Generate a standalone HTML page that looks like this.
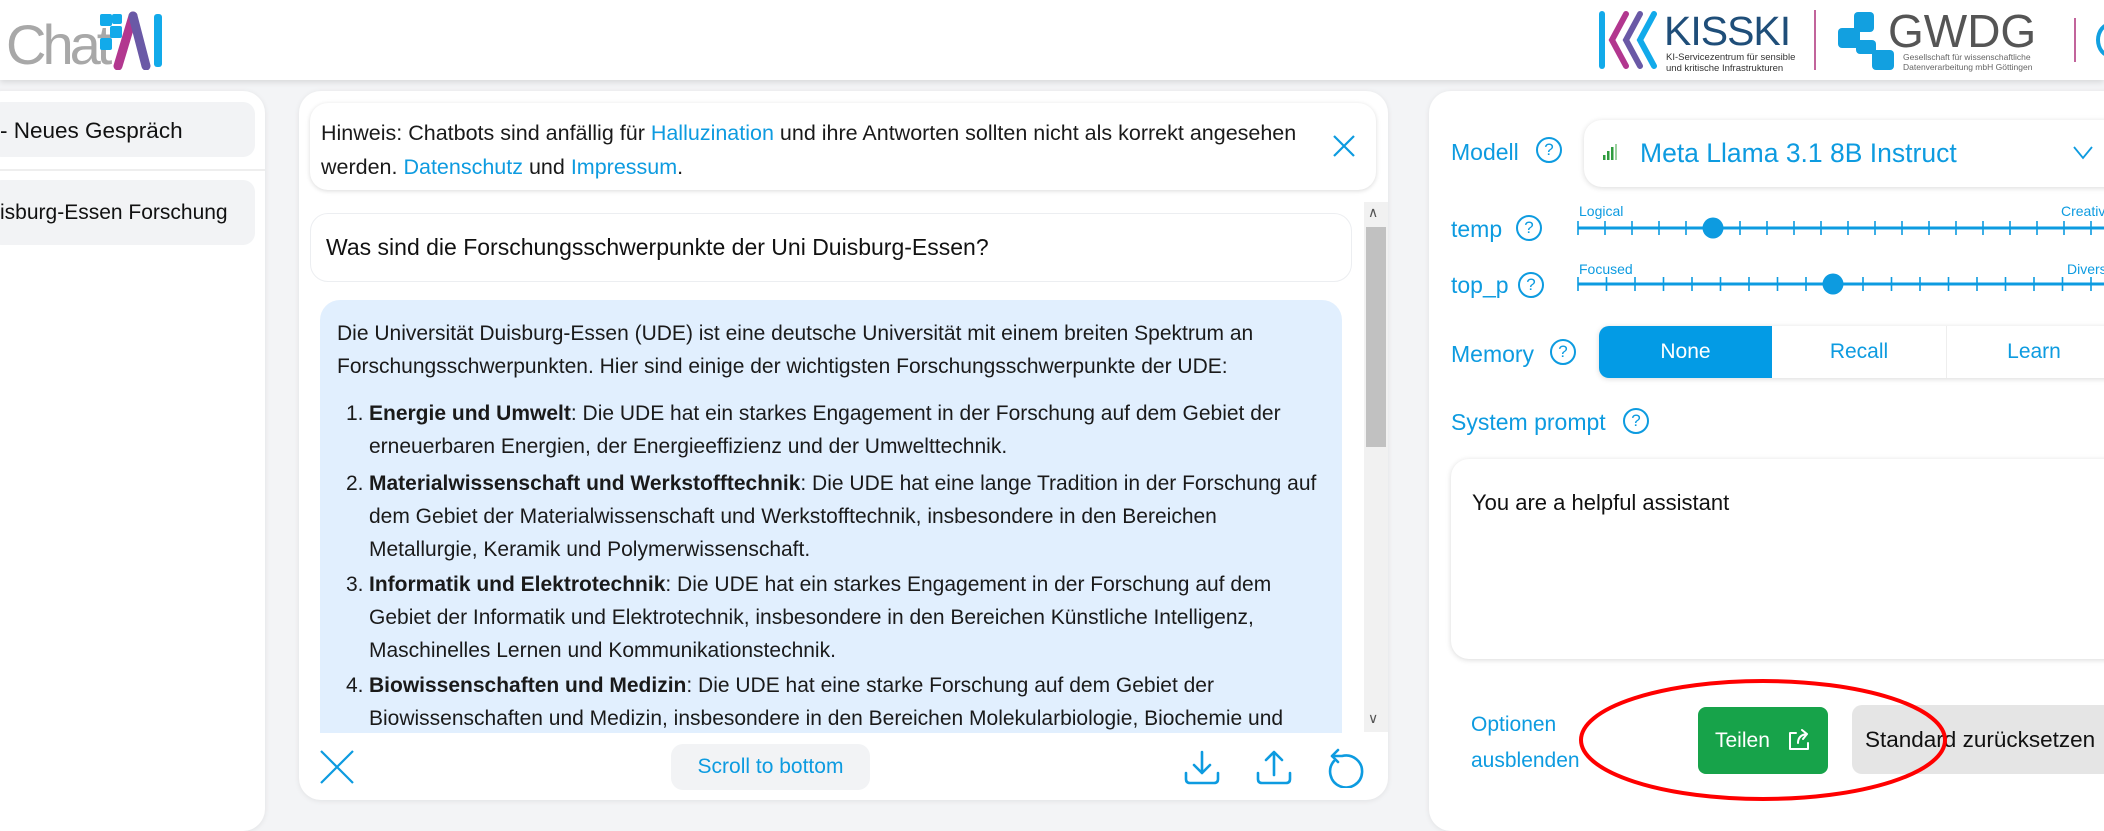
<!DOCTYPE html>
<html><head><meta charset="utf-8"><style>
*{box-sizing:border-box;margin:0;padding:0}
body{width:2104px;height:814px;overflow:hidden;background:#f3f4f6;font-family:"Liberation Sans",sans-serif;position:relative;color:#111}
.abs{position:absolute}
.header{left:0;top:0;width:2104px;height:80px;background:#fff;box-shadow:0 2px 6px rgba(0,0,0,.12)}
.blue{color:#0d9be0}
.panel{background:#fff;border-radius:22px;box-shadow:0 1px 6px rgba(0,0,0,.08)}
.txt{font-size:21px;line-height:33px;white-space:nowrap;color:#1a1a1a}
.q{border:2px solid #0d9be0;border-radius:50%;width:26px;height:26px;font-size:17px;line-height:22px;text-align:center;color:#0d9be0;position:absolute}
.lbl{font-size:23px;color:#0d9be0;position:absolute}
</style></head><body>
<div class="abs header"></div>
<!-- Chat AI logo -->
<div class="abs" style="left:6px;top:12px;font-size:56px;color:#a8a8a8;letter-spacing:-4px;font-family:'Liberation Sans',sans-serif">Chat</div>
<svg class="abs" style="left:98px;top:10px" width="70" height="60" viewBox="0 0 70 60">
<rect x="2" y="4" width="12" height="12" rx="2" fill="#12aaea"/><rect x="12" y="16" width="12" height="12" rx="2" fill="#12aaea"/><rect x="2" y="28" width="12" height="12" rx="2" fill="#12aaea"/><rect x="14" y="4" width="10" height="10" rx="2" fill="#12aaea"/>
<path d="M20 56 L35 6" stroke="#b2378f" stroke-width="9" stroke-linecap="round"/>
<path d="M35 6 L48 56" stroke="#6a59a6" stroke-width="9" stroke-linecap="round"/>
<rect x="56" y="4" width="8" height="53" rx="3" fill="#12aaea"/>
</svg>
<!-- KISSKI -->
<svg class="abs" style="left:1598px;top:10px" width="60" height="60" viewBox="0 0 60 60">
<path d="M4 4 V56" stroke="#12aaea" stroke-width="6" stroke-linecap="round"/>
<path d="M28 4 L14 30 L28 56" stroke="#b2378f" stroke-width="6" fill="none" stroke-linecap="round"/>
<path d="M42 4 L28 30 L42 56" stroke="#6a59a6" stroke-width="6" fill="none" stroke-linecap="round"/>
<path d="M56 4 L42 30 L56 56" stroke="#12aaea" stroke-width="6" fill="none" stroke-linecap="round"/>
</svg>
<div class="abs" style="left:1664px;top:8px;font-size:41px;color:#1f4e79;letter-spacing:-1px">KISSKI</div>
<div class="abs" style="left:1666px;top:52px;font-size:9.5px;line-height:11px;color:#333">KI-Servicezentrum für sensible<br>und kritische Infrastrukturen</div>
<div class="abs" style="left:1814px;top:10px;width:2px;height:60px;background:#c2649b"></div>
<svg class="abs" style="left:1836px;top:10px" width="60" height="60" viewBox="0 0 60 60">
<rect x="18" y="2" width="20" height="20" rx="4" fill="#12a0e0"/><rect x="2" y="18" width="22" height="20" rx="4" fill="#12a0e0"/><rect x="20" y="30" width="20" height="14" rx="4" fill="#12a0e0"/><rect x="36" y="40" width="22" height="20" rx="4" fill="#12a0e0"/>
</svg>
<div class="abs" style="left:1888px;top:4px;font-size:46px;color:#555">GWDG</div>
<div class="abs" style="left:1903px;top:52px;font-size:8.5px;line-height:10px;color:#666">Gesellschaft für wissenschaftliche<br>Datenverarbeitung mbH Göttingen</div>
<div class="abs" style="left:2074px;top:18px;width:2px;height:44px;background:#c2649b"></div>
<div class="abs" style="left:2096px;top:22px;width:30px;height:36px;border:4px solid #12a0e0;border-radius:50%"></div>

<!-- sidebar -->
<div class="abs panel" style="left:-20px;top:91px;width:285px;height:740px"></div>
<div class="abs" style="left:-10px;top:102px;width:265px;height:55px;background:#f2f3f5;border-radius:12px"></div>
<div class="abs" style="left:0;top:118px;font-size:22.5px">- Neues Gespräch</div>
<div class="abs" style="left:0;top:169px;width:265px;height:2px;background:#eee"></div>
<div class="abs" style="left:-10px;top:180px;width:265px;height:65px;background:#f2f3f5;border-radius:12px"></div>
<div class="abs" style="left:0;top:201px;font-size:21px">isburg-Essen Forschung</div>

<!-- center -->
<div class="abs panel" style="left:299px;top:91px;width:1089px;height:709px"></div>
<div class="abs" style="left:310px;top:103px;width:1066px;height:87px;background:#fff;border-radius:18px;box-shadow:0 1px 5px rgba(0,0,0,.15)"></div>
<div class="abs txt" style="left:321px;top:116px;font-size:21.5px;line-height:34px">Hinweis: Chatbots sind anfällig für <span class="blue">Halluzination</span> und ihre Antworten sollten nicht als korrekt angesehen<br>werden. <span class="blue">Datenschutz</span> und <span class="blue">Impressum</span>.</div>
<svg class="abs" style="left:1332px;top:134px" width="24" height="24"><path d="M2 2L22 22M22 2L2 22" stroke="#0d9be0" stroke-width="2.2"/></svg>
<div class="abs" style="left:310px;top:213px;width:1042px;height:69px;border:1.5px solid #eceef1;border-radius:18px;background:#fff"></div>
<div class="abs" style="left:326px;top:234px;font-size:23px;white-space:nowrap">Was sind die Forschungsschwerpunkte der Uni Duisburg-Essen?</div>
<!-- scrollbar -->
<div class="abs" style="left:1364px;top:202px;width:24px;height:530px;background:#f1f1f1"></div>
<div class="abs" style="left:1366px;top:227px;width:20px;height:220px;background:#c1c1c1"></div>
<div class="abs" style="left:1368px;top:204px;font-size:14px;color:#555">&#8743;</div>
<div class="abs" style="left:1368px;top:710px;font-size:14px;color:#555">&#8744;</div>
<div class="abs" style="left:320px;top:300px;width:1022px;height:433px;background:#e1effe;border-radius:20px 20px 0 0;overflow:hidden">
<div class="txt" style="position:absolute;left:17px;top:17px">Die Universität Duisburg-Essen (UDE) ist eine deutsche Universität mit einem breiten Spektrum an<br>Forschungsschwerpunkten. Hier sind einige der wichtigsten Forschungsschwerpunkte der UDE:</div>
<div class="txt" style="position:absolute;left:26px;top:97px">1.</div>
<div class="txt" style="position:absolute;left:49px;top:97px"><b>Energie und Umwelt</b>: Die UDE hat ein starkes Engagement in der Forschung auf dem Gebiet der<br>erneuerbaren Energien, der Energieeffizienz und der Umwelttechnik.</div>
<div class="txt" style="position:absolute;left:26px;top:167px">2.</div>
<div class="txt" style="position:absolute;left:49px;top:167px"><b>Materialwissenschaft und Werkstofftechnik</b>: Die UDE hat eine lange Tradition in der Forschung auf<br>dem Gebiet der Materialwissenschaft und Werkstofftechnik, insbesondere in den Bereichen<br>Metallurgie, Keramik und Polymerwissenschaft.</div>
<div class="txt" style="position:absolute;left:26px;top:268px">3.</div>
<div class="txt" style="position:absolute;left:49px;top:268px"><b>Informatik und Elektrotechnik</b>: Die UDE hat ein starkes Engagement in der Forschung auf dem<br>Gebiet der Informatik und Elektrotechnik, insbesondere in den Bereichen Künstliche Intelligenz,<br>Maschinelles Lernen und Kommunikationstechnik.</div>
<div class="txt" style="position:absolute;left:26px;top:369px">4.</div>
<div class="txt" style="position:absolute;left:49px;top:369px"><b>Biowissenschaften und Medizin</b>: Die UDE hat eine starke Forschung auf dem Gebiet der<br>Biowissenschaften und Medizin, insbesondere in den Bereichen Molekularbiologie, Biochemie und</div>
</div>
<svg class="abs" style="left:320px;top:750px" width="34" height="34"><path d="M1 1L33 33M33 1L1 33" stroke="#0d9be0" stroke-width="2.2"/></svg>
<div class="abs" style="left:671px;top:744px;width:199px;height:46px;background:#f2f3f5;border-radius:12px;text-align:center;line-height:46px;font-size:21px;color:#0d9be0;white-space:nowrap">Scroll to bottom</div>
<svg class="abs" style="left:1184px;top:749px" width="36" height="36" viewBox="0 0 36 36" fill="none" stroke="#0d9be0" stroke-width="2.6" stroke-linecap="round" stroke-linejoin="round"><path d="M18 3V24M10 16L18 24L26 16M2 24V30Q2 34 6 34H30Q34 34 34 30V24"/></svg>
<svg class="abs" style="left:1256px;top:749px" width="36" height="36" viewBox="0 0 36 36" fill="none" stroke="#0d9be0" stroke-width="2.6" stroke-linecap="round" stroke-linejoin="round"><path d="M18 26V3M10 11L18 3L26 11M2 24V30Q2 34 6 34H30Q34 34 34 30V24"/></svg>
<svg class="abs" style="left:1328px;top:748px" width="38" height="40" viewBox="0 0 38 40" fill="none" stroke="#0d9be0" stroke-width="2.6" stroke-linecap="round" stroke-linejoin="round"><path d="M6 13A16 16 0 1 0 14 8H4M10 2L4 8L10 14"/></svg>

<!-- right panel -->
<div class="abs panel" style="left:1429px;top:91px;width:700px;height:740px"></div>
<div class="lbl" style="left:1451px;top:139px">Modell</div><div class="q" style="left:1536px;top:137px">?</div>
<div class="abs" style="left:1584px;top:120px;width:540px;height:67px;background:#fff;border-radius:18px;box-shadow:0 1px 6px rgba(0,0,0,.15)"></div>
<svg class="abs" style="left:1603px;top:144px" width="14" height="16"><rect x="0" y="11" width="2.5" height="5" fill="#2e9b3e"/><rect x="4" y="7" width="2.5" height="9" fill="#2e9b3e"/><rect x="8" y="3" width="2.5" height="13" fill="#2e9b3e"/><rect x="12" y="0" width="2" height="16" fill="#9bd19f"/></svg>
<div class="abs" style="left:1640px;top:138px;font-size:26.5px;color:#0d9be0;white-space:nowrap">Meta Llama 3.1 8B Instruct</div>
<svg class="abs" style="left:2073px;top:146px" width="20" height="14"><path d="M1 1L10 12L19 1" stroke="#0d9be0" stroke-width="1.8" fill="none"/></svg>

<div class="lbl" style="left:1451px;top:216px">temp</div><div class="q" style="left:1516px;top:215px">?</div>
<div class="lbl" style="left:1451px;top:272px">top_p</div><div class="q" style="left:1518px;top:272px">?</div>
<div class="abs" style="left:1579px;top:203px;font-size:14px;color:#0d9be0">Logical</div>
<div class="abs" style="left:2061px;top:203px;font-size:14px;color:#0d9be0">Creative</div>
<div class="abs" style="left:1579px;top:261px;font-size:14px;color:#0d9be0">Focused</div>
<div class="abs" style="left:2067px;top:261px;font-size:14px;color:#0d9be0">Diverse</div>
<svg class="abs" style="left:1570px;top:210px" width="534" height="90">
<g stroke="#0d9be0" stroke-width="3"><line x1="8" y1="18" x2="534" y2="18"/><line x1="8" y1="74" x2="534" y2="74"/></g>
<g stroke="#0d9be0" stroke-width="1.6">
<path d="M8 11V25M35 11V25M62 11V25M89 11V25M116 11V25M170 11V25M197 11V25M224 11V25M251 11V25M278 11V25M305 11V25M332 11V25M359 11V25M386 11V25M413 11V25M440 11V25M467 11V25M494 11V25M521 11V25"/>
<path d="M8 67V81M36.5 67V81M65 67V81M93.5 67V81M122 67V81M150.5 67V81M179 67V81M207.5 67V81M236 67V81M293 67V81M321.5 67V81M350 67V81M378.5 67V81M407 67V81M435.5 67V81M464 67V81M492.5 67V81M521 67V81"/>
</g>
<circle cx="143" cy="18" r="10.5" fill="#0d9be0"/><circle cx="263" cy="74" r="10.5" fill="#0d9be0"/>
</svg>

<div class="lbl" style="left:1451px;top:341px">Memory</div><div class="q" style="left:1550px;top:339px">?</div>
<div class="abs" style="left:1599px;top:326px;width:520px;height:52px;background:#fff;border-radius:10px;box-shadow:0 1px 6px rgba(0,0,0,.15);overflow:hidden">
<div class="abs" style="left:0;top:0;width:173px;height:52px;background:#039be5;color:#fff;font-size:21px;text-align:center;line-height:52px">None</div>
<div class="abs" style="left:173px;top:0;width:174px;height:52px;color:#0d9be0;font-size:21px;text-align:center;line-height:52px">Recall</div>
<div class="abs" style="left:347px;top:0;width:1px;height:52px;background:#eee"></div>
<div class="abs" style="left:348px;top:0;width:174px;height:52px;color:#0d9be0;font-size:21px;text-align:center;line-height:52px">Learn</div>
</div>
<div class="lbl" style="left:1451px;top:409px">System prompt</div><div class="q" style="left:1623px;top:408px">?</div>
<div class="abs" style="left:1451px;top:459px;width:680px;height:200px;background:#fff;border-radius:18px;box-shadow:0 1px 6px rgba(0,0,0,.15)"></div>
<div class="abs" style="left:1472px;top:490px;font-size:22px">You are a helpful assistant</div>
<div class="abs" style="left:1471px;top:707px;font-size:21px;line-height:36px;color:#0d9be0">Optionen<br>ausblenden</div>
<div class="abs" style="left:1698px;top:707px;width:130px;height:67px;background:#17a34a;border-radius:8px;color:#fff;font-size:21px;line-height:67px;padding-left:17px">Teilen</div>
<svg class="abs" style="left:1788px;top:729px" width="22" height="22" fill="none" stroke="#fff" stroke-width="2" stroke-linecap="round" stroke-linejoin="round"><path d="M8 4H2V20H20V14M10 14Q10 6 19 5M14 1L19 5L15 10"/></svg>
<div class="abs" style="left:1852px;top:705px;width:280px;height:69px;background:#e5e5e5;border-radius:10px;font-size:22.5px;line-height:69px;padding-left:13px;white-space:nowrap">Standard zurücksetzen</div>
<svg class="abs" style="left:1570px;top:674px" width="390" height="135"><ellipse cx="193" cy="66" rx="182" ry="59" fill="none" stroke="#f00" stroke-width="4"/></svg>
</body></html>
